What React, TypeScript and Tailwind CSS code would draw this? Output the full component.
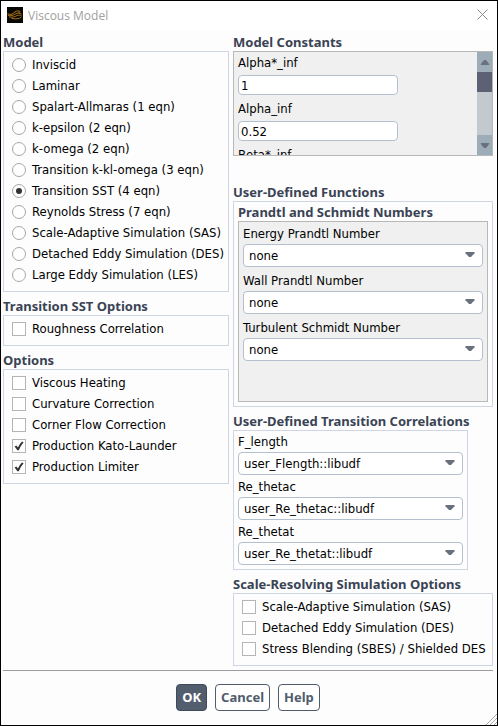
import { useState } from "react";

const MODELS = [
  "Inviscid",
  "Laminar",
  "Spalart-Allmaras (1 eqn)",
  "k-epsilon (2 eqn)",
  "k-omega (2 eqn)",
  "Transition k-kl-omega (3 eqn)",
  "Transition SST (4 eqn)",
  "Reynolds Stress (7 eqn)",
  "Scale-Adaptive Simulation (SAS)",
  "Detached Eddy Simulation (DES)",
  "Large Eddy Simulation (LES)",
];

const OPTIONS = [
  { label: "Viscous Heating", checked: false },
  { label: "Curvature Correction", checked: false },
  { label: "Corner Flow Correction", checked: false },
  { label: "Production Kato-Launder", checked: true },
  { label: "Production Limiter", checked: true },
];

const CONSTANTS = [
  { id: "alpha-star-inf", label: "Alpha*_inf", value: "1" },
  { id: "alpha-inf", label: "Alpha_inf", value: "0.52" },
  { id: "beta-star-inf", label: "Beta*_inf", value: "0.09" },
];

const PRANDTL = [
  { id: "energy-prandtl", label: "Energy Prandtl Number" },
  { id: "wall-prandtl", label: "Wall Prandtl Number" },
  { id: "turbulent-schmidt", label: "Turbulent Schmidt Number" },
];

const CORRELATIONS = [
  { id: "f-length", label: "F_length", value: "user_Flength::libudf" },
  { id: "re-thetac", label: "Re_thetac", value: "user_Re_thetac::libudf" },
  { id: "re-thetat", label: "Re_thetat", value: "user_Re_thetat::libudf" },
];

const SCALE_RESOLVING = [
  "Scale-Adaptive Simulation (SAS)",
  "Detached Eddy Simulation (DES)",
  "Stress Blending (SBES) / Shielded DES",
];

interface GroupProps {
  title: string;
  className?: string;
  boxClassName?: string;
  children: React.ReactNode;
}

function Group({ title, className = "", boxClassName = "border-[#d0d5e5]", children }: GroupProps) {
  return (
    <section className={className}>
      <h2 className="font-['Noto_Sans',sans-serif] font-bold leading-[18px] whitespace-nowrap text-[#3a4354]">{title}</h2>
      <div className={`border ${boxClassName}`}>{children}</div>
    </section>
  );
}

function CheckRow({ label, checked = false }: { label: string; checked?: boolean }) {
  return (
    <label className="flex h-[21px] items-center gap-1.5 whitespace-nowrap">
      <span className="relative size-3.5 shrink-0">
        <input
          type="checkbox"
          defaultChecked={checked}
          className="peer block size-3.5 appearance-none border border-[#b5b5b5] bg-white"
        />
        <svg viewBox="0 0 14 14" className="pointer-events-none absolute inset-0 hidden size-3.5 peer-checked:block">
          <path d="M2.6 7.4 4.4 6.4 5.9 8.6Q7.6 4.8 10 2.6L11.6 3.2Q8.6 6.6 6.8 11.2H5.4Z" fill="#333" />
        </svg>
      </span>
      {label}
    </label>
  );
}

function SelectField({ id, label, value }: { id: string; label: string; value: string }) {
  return (
    <div className="flex flex-col gap-px">
      <label htmlFor={id} className="leading-[18px]">{label}</label>
      <div className="relative">
        <select
          id={id}
          defaultValue={value}
          className="block h-[23px] w-full appearance-none rounded border border-[#b4bfd0] bg-white pr-6 pl-[5px]"
        >
          <option>{value}</option>
        </select>
        <svg viewBox="0 0 10 5" className="pointer-events-none absolute top-2 right-2 h-[5px] w-2.5">
          <path d="M0.5 0h9v1.2L6 5H4L0.5 1.2Z" fill="#69717e" />
        </svg>
      </div>
    </div>
  );
}

function ScrollArrow({ down = false }: { down?: boolean }) {
  return (
    <button
      type="button"
      aria-label={down ? "Scroll down" : "Scroll up"}
      className="flex h-5 w-full items-center justify-center bg-[#9dadb7]"
    >
      <svg viewBox="0 0 10 5" className={down ? "h-[5px] w-2.5" : "h-[5px] w-2.5 rotate-180"}>
        <path d="M0.8 0h8.4v1L6 5H4L0.8 1Z" fill="#69717e" />
      </svg>
    </button>
  );
}

function TitleBar() {
  return (
    <header className="flex h-[29px] items-center bg-white pr-[9px] pl-1.5">
      <svg viewBox="0 0 16 16" className="mb-px size-4 shrink-0">
        <rect width="16" height="16" fill="#0a0805" />
        <g fill="none" stroke="#b07d1c" strokeLinecap="round">
          <path d="M0.8 6.8C3 8 5 7.4 6.6 6 8.4 4.2 10.8 3.4 12.6 4.2 13.4 4.8 12.8 5.6 11.8 5.8" strokeWidth="1" />
          <path d="M1.2 8.4C4 9.4 6.4 8.2 8.2 7 10.4 5.8 13 5.8 14.4 7" strokeWidth="0.9" />
          <path d="M2.4 10C5.6 10.8 8.2 9.4 10 8.6 12 7.8 13.6 8 14.4 8.8" strokeWidth="0.9" />
          <path d="M4.8 11.4C8.2 12.2 12 12 14 10.4" strokeWidth="0.9" />
        </g>
      </svg>
      <h1 className="ml-[5px] flex-1 font-['Open_Sans',sans-serif] text-xs text-[#a0a0a0]">Viscous Model</h1>
      <button type="button" aria-label="Close">
        <svg viewBox="0 0 11 11" className="mb-0.5 size-[11px]">
          <path d="M0.5 0.5 10.5 10.5M10.5 0.5 0.5 10.5" stroke="#8a8a8a" strokeWidth="1" />
        </svg>
      </button>
    </header>
  );
}

export default function App() {
  const [model, setModel] = useState("Transition SST (4 eqn)");

  return (
    <div className="relative flex min-h-screen flex-col border border-black bg-[#fdfdfe] font-['DejaVu_Sans_Condensed','Noto_Sans',sans-serif] text-[13px] text-black">
      <TitleBar />

      <main className="grid grid-cols-[226fr_260fr] gap-1 pt-[3px] pr-1 pl-0.5">
        <div className="flex min-w-0 flex-col gap-[5px]">
          <Group title="Model">
            <div className="px-2 pt-0.5 pb-1.5">
              {MODELS.map((name) => (
                <label key={name} className="flex h-[21px] items-center gap-1.5 whitespace-nowrap">
                  <input
                    type="radio"
                    name="model"
                    checked={model === name}
                    onChange={() => setModel(name)}
                    className="grid size-3.5 shrink-0 appearance-none place-content-center rounded-full border border-[#a6a6a6] bg-white before:size-1.5 before:rounded-full checked:before:bg-[#333]"
                  />
                  {name}
                </label>
              ))}
            </div>
          </Group>

          <Group title="Transition SST Options">
            <div className="px-2 pt-0.5 pb-1.5">
              <CheckRow label="Roughness Correlation" />
            </div>
          </Group>

          <Group title="Options">
            <div className="px-2 pt-0.5 pb-1.5">
              {OPTIONS.map((o) => (
                <CheckRow key={o.label} label={o.label} checked={o.checked} />
              ))}
            </div>
          </Group>
        </div>

        <div className="flex min-w-0 flex-col gap-[5px]">
          <Group title="Model Constants" className="mb-[22px]" boxClassName="border-[#b8b8b8] bg-[#f0f0f0]">
            <div className="flex h-[103px]">
              <div className="flex flex-1 flex-col gap-[5px] overflow-hidden px-1 pt-0.5">
                {CONSTANTS.map((c) => (
                  <div key={c.id} className="flex shrink-0 flex-col gap-[3px]">
                    <label htmlFor={c.id} className="leading-[18px]">{c.label}</label>
                    <input
                      id={c.id}
                      type="text"
                      defaultValue={c.value}
                      className="h-5 w-40 rounded border border-[#b4bfd0] bg-white px-0.5"
                    />
                  </div>
                ))}
              </div>
              <div className="flex w-[15px] flex-col bg-[#c2cad0]">
                <ScrollArrow />
                <div className="h-5 bg-[#5c6273]" />
                <div className="flex-1" />
                <ScrollArrow down />
              </div>
            </div>
          </Group>

          <Group title="User-Defined Functions">
            <div className="px-1 pt-px pb-1">
              <Group title="Prandtl and Schmidt Numbers" boxClassName="border-[#b8b8b8] bg-[#f0f0f0]">
                <div className="flex flex-col gap-[5px] px-1 pt-[3px] pb-10">
                  {PRANDTL.map((p) => (
                    <SelectField key={p.id} id={p.id} label={p.label} value="none" />
                  ))}
                </div>
              </Group>
            </div>
          </Group>

          <Group title="User-Defined Transition Correlations" className="w-[235px]">
            <div className="flex flex-col gap-[3px] px-1 pt-0.5 pb-1">
              {CORRELATIONS.map((c) => (
                <SelectField key={c.id} id={c.id} label={c.label} value={c.value} />
              ))}
            </div>
          </Group>

          <Group title="Scale-Resolving Simulation Options">
            <div className="px-2 pt-0.5 pb-1.5">
              {SCALE_RESOLVING.map((label) => (
                <CheckRow key={label} label={label} />
              ))}
            </div>
          </Group>
        </div>
      </main>

      <footer className="mt-1 mr-1 ml-0.5 flex justify-center gap-2 border-t border-[#9c9ca0] pt-[13px] font-['Noto_Sans',sans-serif] font-bold text-[#505c6c]">
        <button type="button" className="h-[27px] rounded border border-[#3f4a5a] bg-[#525e6e] px-[5px] text-white">
          OK
        </button>
        <button type="button" className="h-[27px] rounded border border-[#505c6c] bg-white px-[5px]">
          Cancel
        </button>
        <button type="button" className="h-[27px] rounded border border-[#505c6c] bg-white px-[5px]">
          Help
        </button>
      </footer>

      {/* resize grip */}
      <svg viewBox="0 0 12 12" className="absolute right-0 bottom-0 size-3">
        <path d="M1 12 12 1M5 12 12 5M9 12 12 9" stroke="#a8a8a8" strokeWidth="1" />
      </svg>
    </div>
  );
}
